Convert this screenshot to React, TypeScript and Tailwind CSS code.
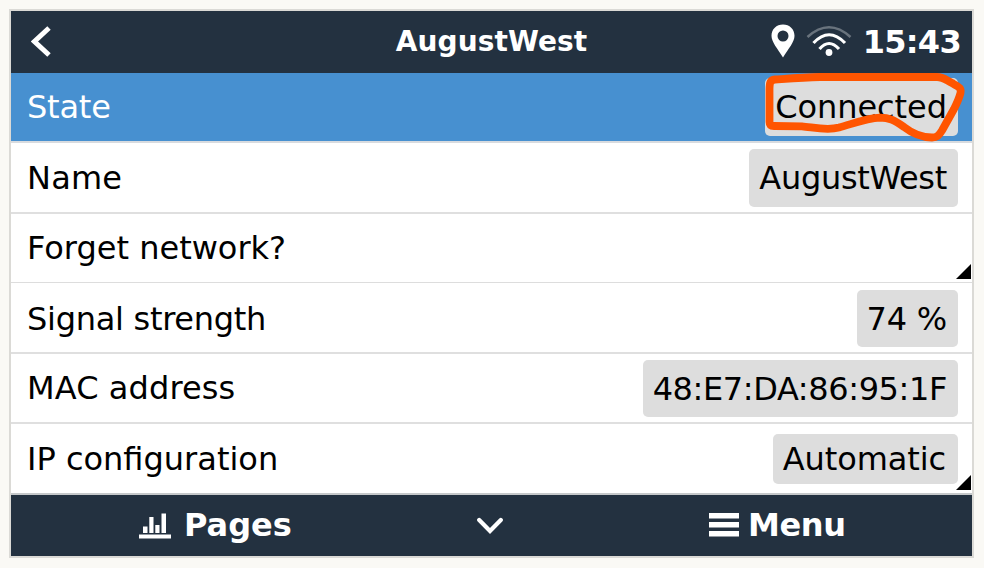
import type { ReactNode } from "react";

type RowProps = {
  label: string;
  value?: string;
  height: string;
  chip?: string;
  labelStyle?: string;
  selected?: boolean;
  editable?: boolean;
  children?: ReactNode;
};

function Row({ label, value, height, chip = "h-[58px] px-[10px]", labelStyle = "", selected, editable, children }: RowProps) {
  return (
    <div
      className={`relative flex shrink-0 items-center justify-between pr-[14px] pl-4 ${height} ${
        selected ? "bg-[#4790d0] text-white" : "bg-white text-black"
      }`}
    >
      <span className={`whitespace-pre leading-[38px] ${labelStyle}`}>{label}</span>
      {value && (
        <span className={`flex items-center rounded-[5px] bg-[#ddd] leading-[38px] text-black ${chip}`}>
          {value}
        </span>
      )}
      {editable && (
        <svg className="absolute right-[1px] bottom-[3px]" width="15" height="15" viewBox="0 0 15 15">
          <path d="M15 0V15H0Z" fill="#000" />
        </svg>
      )}
      {children}
    </div>
  );
}

function Annotation() {
  return (
    <svg className="absolute top-0 right-0 z-10 overflow-visible" width="232" height="70" viewBox="740 73 232 70">
      <path
        d="M775 79.5C790 78.500 803 77.500 820 77H937C943 77 946 80 952 83C959 87 961.500 88 960.500 93C959 99 957 103 954 109L942 130.500C939 135.500 937 137.500 932 137.500C921 137.500 913 134 904 127C894 120 889 117.600 880 117.600C867 118 855 123 839 127.600C826 131 812 127 802 126.300L774 126C770 126 769.500 125 769.500 122V90C769.500 83 770 80 775 79.500Z"
        fill="none"
        stroke="#ff5500"
        strokeWidth="7.8"
        strokeLinejoin="round"
      />
    </svg>
  );
}

export default function App() {
  return (
    <div className="h-[568px] w-[984px] bg-[#faf9f5] pt-[9px] pl-[9px] font-['DejaVu_Sans',sans-serif] text-[32px]">
      <div className="flex h-[549px] w-[965px] flex-col border-2 border-[#dbdad6] bg-[#ddd]">
        <header className="grid h-[62px] shrink-0 grid-cols-[1fr_auto_1fr] items-center bg-[#233140] text-white">
          <svg className="ml-[20px]" width="21" height="32" viewBox="0 0 21 32">
            <path d="M18 2L3.500 15.500L18 29" fill="none" stroke="#fff" strokeWidth="5" />
          </svg>
          <h1 className="pb-px text-[28px] leading-8 font-bold tracking-[0.1px]">AugustWest</h1>
          <div className="flex items-center justify-end pr-[11px]">
            <svg className="mb-[3px]" width="24" height="34" viewBox="0 0 24 34">
              <path
                fillRule="evenodd"
                fill="#fff"
                d="M12 0.500C5.500 0.500 .5 5.300 .5 11.700C.5 18 6.500 24.500 12 33.500C17.500 24.500 23.500 18 23.500 11.700C23.500 5.300 18.500 .5 12 .5ZM12 6.500A5.500 5.500 0 1 1 12 17.500A5.500 5.500 0 1 1 12 6.500Z"
              />
            </svg>
            <svg className="mb-0.5 ml-[11px]" width="46" height="32" viewBox="0 0 46 32" fill="none" stroke="#fff">
              <path d="M1.500 12Q23 -7.500 44.500 12" stroke="#69737d" strokeWidth="2.600" />
              <path d="M7.500 18Q23 1.500 39 18" strokeWidth="3.200" />
              <path d="M13.500 24Q23 13 33 24" strokeWidth="3.200" />
              <circle cx="23" cy="27.500" r="3.400" fill="#fff" stroke="none" />
            </svg>
            <span className="ml-[11px] pb-px leading-[38px] font-bold tracking-[-0.7px]">15:43</span>
          </div>
        </header>
        <main className="flex h-[422px] shrink-0 flex-col">
          <div className="flex flex-col">
            <Row label="State" value="Connected" height="h-[68px]" chip="h-[58px] pr-[11px] pl-[10px] tracking-[-0.05px]" labelStyle="tracking-[-0.2px]" selected>
              <Annotation />
            </Row>
            <div className="h-0.5 bg-[#d8dbdf]" />
            <Row label="Name" value="AugustWest" height="h-[69px]" chip="h-[58px] pr-[11px] pl-[10px] tracking-[-0.3px]" labelStyle="tracking-[0.2px]" />
            <div className="h-0.5 bg-[#dfdfdf]" />
            <Row label="Forget network?" height="h-[68px]" editable />
            <div className="h-px bg-[#ddd]" />
            <Row label="Signal strength" value="74 %" height="h-[69px]" labelStyle="pt-0.5 tracking-[-0.28px]" chip="mt-px h-[57px] pr-[11px] pl-[10px] pt-px tracking-[-0.2px]" />
            <div className="h-0.5 bg-[#dfdfdf]" />
            <Row label="MAC address" value="48:E7:DA:86:95:1F" height="h-[68px]" chip="mt-px h-[57px] pr-[11px] pl-[10px] tracking-[-0.38px]" labelStyle="tracking-[0.1px]" />
            <div className="h-0.5 bg-[#dfdfdf]" />
            <Row label="IP configuration" value="Automatic" height="h-[69px]" chip="h-[50px] pr-[12px] pl-[10px] tracking-[-0.1px]" editable />
          </div>
          <div className="h-0.5 bg-[#c5c8ca]" />
        </main>
        <footer className="grid h-[61px] shrink-0 grid-cols-[407px_147px_407px] items-center bg-[#233140] font-bold text-white">
          <div className="flex items-center pl-[128px]">
            <svg className="mt-px mr-[13px]" width="32" height="26" viewBox="0 0 32 26" fill="#fff">
              <path d="M0 21.500H32V25.500H0ZM4 13.500H8.500V20H4ZM10.300 4H14.500V20H10.300ZM16.300 12H20.500V20H16.300ZM22.500 0.500H27V20H22.500Z" />
            </svg>
            <span className="pb-0.5 leading-[38px]">Pages</span>
          </div>
          <svg className="ml-[59px]" width="26" height="18" viewBox="0 0 26 18">
            <path d="M2.200 3L13 14L23.800 3" fill="none" stroke="#fff" strokeWidth="4.200" strokeLinecap="round" />
          </svg>
          <div className="flex items-center pl-[144px]">
            <svg className="mr-[9px] mb-px" width="30" height="24" viewBox="0 0 30 24" fill="#fff">
              <path d="M0 0H30V5.500H0ZM0 9H30V14.500H0ZM0 18H30V23.500H0Z" />
            </svg>
            <span className="pb-0.5 leading-[38px] tracking-[-0.4px]">Menu</span>
          </div>
        </footer>
      </div>
    </div>
  );
}
